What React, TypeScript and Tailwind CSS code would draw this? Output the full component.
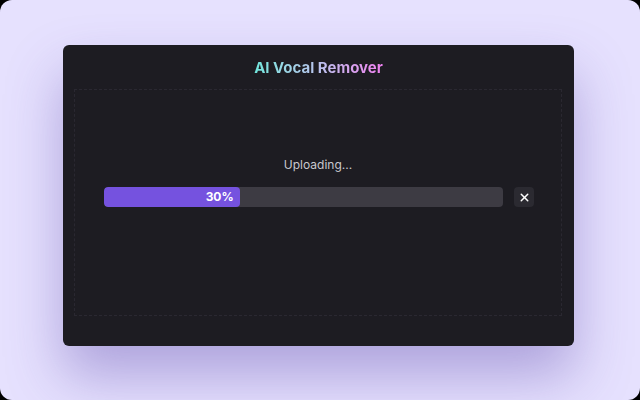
import { X } from 'lucide-react';

export default function App() {
  const progress = 34;

  return (
    <div className="w-[640px] h-[400px] bg-black" style={{ fontFamily: 'Inter, "Noto Sans", sans-serif' }}>
      <div className="w-full h-full rounded-[12px] bg-[#e6e1fe] pt-[45px] pl-[63px] overflow-hidden">
        <div className="w-[511px] h-[301px] rounded-[6px] bg-[#1d1c22] shadow-[0_30px_55px_rgba(90,70,170,0.4)] flex flex-col">
          {/* Title */}
          <h1 className="pt-[11px] h-[44px] text-center text-[15px] leading-[24px] font-bold">
            <span className="bg-gradient-to-r from-[#6fe6dc] via-[#b9c3ee] to-[#ee7ff0] bg-clip-text text-transparent">
              AI Vocal Remover
            </span>
          </h1>

          {/* Upload area */}
          <div className="ml-[11px] w-[488px] h-[227px] border border-dashed border-[#2a2831] flex flex-col items-center">
            <p className="mt-[66px] text-[12px] leading-[18px] text-[#c9c8ce]">Uploading...</p>
            <div className="mt-[13px] w-full flex items-center pl-[29px]">
              <div className="w-[399px] h-[20px] rounded-[4px] bg-[#3d3b43] overflow-hidden">
                <div
                  className="h-full bg-[#7552df] rounded-[4px] flex items-center justify-end pr-[6px]"
                  style={{ width: `${progress}%` }}
                >
                  <span className="text-[12px] font-bold text-white">30%</span>
                </div>
              </div>
              <button className="ml-[11px] w-[20px] h-[20px] rounded-[4px] bg-[#2b2a31] flex items-center justify-center text-white">
                <X size={13} strokeWidth={2.75} />
              </button>
            </div>
          </div>
        </div>
      </div>
    </div>
  );
}
